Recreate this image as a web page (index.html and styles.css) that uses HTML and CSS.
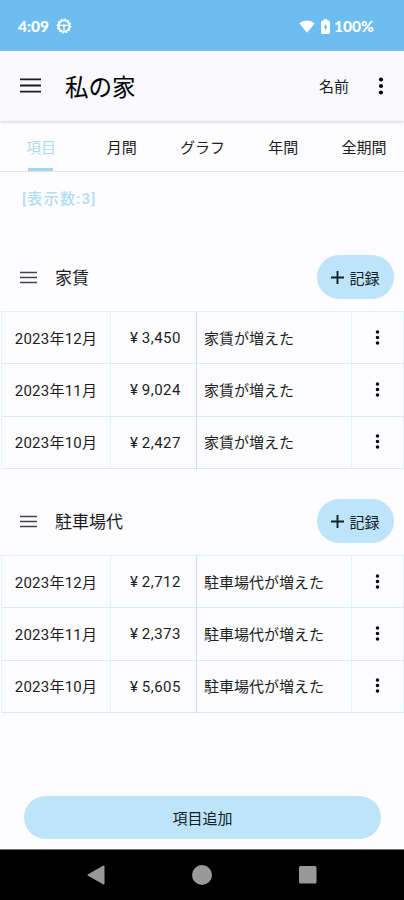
FILE: index.html
```
<!DOCTYPE html>
<html lang="ja">
<head>
    <meta charset="utf-8">
    <title>私の家</title>
    <link rel="stylesheet" href="styles.css">
</head>
<body>
    <svg class="defs" width="0" height="0">
        <symbol id="menu" viewBox="0 0 20 14">
            <path d="M0 1.2h20M0 7h20M0 12.8h20" stroke="currentColor" stroke-width="1.8"/>
        </symbol>
        <symbol id="dots" viewBox="0 0 6 18">
            <circle cx="3" cy="2.5" r="2.1"/><circle cx="3" cy="9" r="2.1"/><circle cx="3" cy="15.5" r="2.1"/>
        </symbol>
        <symbol id="plus" viewBox="0 0 13 13">
            <path d="M6.5 0v13M0 6.5h13" stroke="currentColor" stroke-width="1.9"/>
        </symbol>
    </svg>

    <div class="status-bar">
        <span class="clock">4:09</span>
        <svg class="wheel" width="16" height="16" viewBox="0 0 16 16" fill="none" stroke="#fff">
            <circle cx="8" cy="8" r="5.6" stroke-width="1.9"/>
            <circle cx="8" cy="8" r="6.9" stroke-width="1.1" stroke-dasharray="1.8 1.81"/>
            <path d="M3 7.3h10M8 8v5" stroke-width="1.2"/>
            <circle cx="8" cy="7.8" r="1" stroke-width="1"/>
        </svg>
        <svg class="wifi" width="16" height="13" viewBox="0 0 16 13" fill="#fff">
            <path d="M.3 3.5C4.7-.5 11.3-.5 15.7 3.5L8 12.7z"/>
        </svg>
        <svg class="battery" width="9" height="15" viewBox="0 0 9 15">
            <path d="M2.8 0h3.4v1.5h1.3Q9 1.5 9 3v10.5q0 1.5-1.5 1.5h-6Q0 15 0 13.5V3q0-1.5 1.5-1.5h1.3z" fill="#fff"/>
            <path d="M5 4.5L2.6 8.8h1.6v3.2l2.3-4.4H5z" fill="#6dbdf1"/>
        </svg>
        <span class="percent">100%</span>
    </div>

    <div class="app-bar">
        <svg class="menu-icon"><use href="#menu"/></svg>
        <h1>私の家</h1>
        <span class="sort">名前</span>
        <svg class="dots-icon"><use href="#dots"/></svg>
    </div>

    <div class="tabs">
        <div class="tab active">項目</div>
        <div class="tab">月間</div>
        <div class="tab">グラフ</div>
        <div class="tab">年間</div>
        <div class="tab">全期間</div>
    </div>

    <div class="content">
        <div class="count">[表示数:3]</div>

        <div class="section">
            <div class="section-header">
                <svg class="drag-icon"><use href="#menu"/></svg>
                <h2>家賃</h2>
                <button class="record"><svg class="plus-icon"><use href="#plus"/></svg>記録</button>
            </div>
            <div class="records">
                <div class="date">2023年12月</div>
                <div class="price"><span class="yen">¥</span>3,450</div>
                <div class="memo">家賃が増えた</div>
                <div class="more"><svg class="row-dots"><use href="#dots"/></svg></div>
                <div class="date">2023年11月</div>
                <div class="price"><span class="yen">¥</span>9,024</div>
                <div class="memo">家賃が増えた</div>
                <div class="more"><svg class="row-dots"><use href="#dots"/></svg></div>
                <div class="date">2023年10月</div>
                <div class="price"><span class="yen">¥</span>2,427</div>
                <div class="memo">家賃が増えた</div>
                <div class="more"><svg class="row-dots"><use href="#dots"/></svg></div>
            </div>
        </div>

        <div class="section">
            <div class="section-header">
                <svg class="drag-icon"><use href="#menu"/></svg>
                <h2>駐車場代</h2>
                <button class="record"><svg class="plus-icon"><use href="#plus"/></svg>記録</button>
            </div>
            <div class="records">
                <div class="date">2023年12月</div>
                <div class="price"><span class="yen">¥</span>2,712</div>
                <div class="memo">駐車場代が増えた</div>
                <div class="more"><svg class="row-dots"><use href="#dots"/></svg></div>
                <div class="date">2023年11月</div>
                <div class="price"><span class="yen">¥</span>2,373</div>
                <div class="memo">駐車場代が増えた</div>
                <div class="more"><svg class="row-dots"><use href="#dots"/></svg></div>
                <div class="date">2023年10月</div>
                <div class="price"><span class="yen">¥</span>5,605</div>
                <div class="memo">駐車場代が増えた</div>
                <div class="more"><svg class="row-dots"><use href="#dots"/></svg></div>
            </div>
        </div>
    </div>

    <button class="add-item">項目追加</button>

    <div class="nav-bar">
        <svg width="18" height="20" viewBox="0 0 18 20"><path class="back" d="M1.5 10L16.5 1.5v17z"/></svg>
        <svg width="20" height="20" viewBox="0 0 20 20"><circle cx="10" cy="10" r="10"/></svg>
        <svg width="18" height="18" viewBox="0 0 18 18"><rect width="17.5" height="17.5" rx="1.5"/></svg>
    </div>
</body>
</html>
```
FILE: styles.css
```
* {
    box-sizing: border-box;
}
body {
    margin: 0;
    height: 900px;
    display: flex;
    flex-direction: column;
    overflow: hidden;
    background: #fdfcff;
    color: #1b1c1e;
    font-family: Roboto, "Noto Sans CJK JP", sans-serif;
    font-size: 15px;
}
h1, h2 {
    margin: 0;
    font-weight: 400;
}
button {
    border: 0;
    padding: 0;
    color: #10202a;
    background: #bde4f9;
    font: inherit;
}
svg {
    flex: none;
}
.defs {
    display: none;
}

.status-bar {
    flex: none;
    height: 51px;
    display: flex;
    align-items: center;
    padding: 1px 29px 0 18px;
    background: #6dbdf1;
    color: #fff;
    font-family: Lato, sans-serif;
    font-size: 15.5px;
    font-weight: 900;
}
.clock {
    width: 31px;
}
.wheel {
    margin-left: 7px;
}
.wifi {
    margin-left: auto;
}
.battery {
    margin: 0 4px 0 6px;
}
.percent {
    width: 41px;
}

.app-bar {
    flex: none;
    height: 70px;
    display: flex;
    align-items: center;
    padding: 0 20px;
    background: #f9f9fe;
    box-shadow: 0 1px 3px #ceced2;
}
.app-bar h1 {
    margin-left: 24px;
    color: #000;
    font-size: 23.5px;
}
.menu-icon {
    width: 21px;
    height: 15px;
    margin-top: -1px;
}
.sort {
    margin: -1px 0 0 auto;
}
.dots-icon {
    width: 6px;
    height: 18px;
    margin-left: 29px;
}

.tabs {
    flex: none;
    height: 51px;
    display: grid;
    grid-template-columns: repeat(5, 1fr);
    border-bottom: 1px solid #e5e4e8;
}
.tab {
    display: flex;
    align-items: center;
    justify-content: center;
    padding: 3px 0 0 1px;
    border-bottom: 3px solid transparent;
}
.tab.active {
    color: #b0ddf5;
    background: linear-gradient(#9fd6f3, #9fd6f3) center bottom / 25px 3px no-repeat border-box;
}

.content {
    flex: 1;
}
.count {
    height: 83px;
    padding: 15px 22px;
    color: #b0ddf5;
    line-height: 24px;
    letter-spacing: 1.3px;
    font-weight: 500;
}
.section {
    margin-bottom: 30px;
}
.section-header {
    height: 56px;
    display: flex;
    align-items: flex-start;
    padding: 0 10px 0 20px;
}
.drag-icon {
    width: 17px;
    height: 13px;
    margin-top: 16px;
    color: #444;
}
.section-header h2 {
    margin-left: 18px;
    font-size: 17px;
    line-height: 46px;
}
.record {
    display: flex;
    align-items: center;
    justify-content: center;
    gap: 5px;
    width: 77px;
    height: 44px;
    margin-left: auto;
    border-radius: 22px;
}
.plus-icon {
    width: 13px;
    height: 13px;
}

.records {
    height: 158px;
    margin-left: 1px;
    display: grid;
    grid-template-columns: 109px 86px 155px 1fr;
    grid-template-rows: repeat(3, 1fr);
    border-top: 1px solid #dff2fb;
    border-left: 1px solid #e2f4fb;
}
.records > div {
    display: flex;
    align-items: center;
    padding-bottom: 1px;
    border-right: 1px solid #e0f3fa;
    border-bottom: 1px solid #d3ecf9;
}
.date {
    justify-content: center;
    letter-spacing: 0.25px;
}
.records > .price {
    justify-content: flex-end;
    padding: 1px 15px 0 0;
    border-right-color: #bfe3f6;
    letter-spacing: 0.5px;
}
.yen {
    width: 15px;
    text-align: center;
}
.memo {
    padding-left: 7px;
}
.more {
    justify-content: center;
}
.row-dots {
    width: 5px;
    height: 15px;
}

.add-item {
    flex: none;
    height: 43px;
    margin: 0 23px 10px 24px;
    border-radius: 22px;
}

.nav-bar {
    flex: none;
    height: 51px;
    display: flex;
    align-items: center;
    justify-content: space-between;
    padding: 0 87px;
    background: #000;
    border-top: 1px solid #777;
}
.nav-bar svg {
    fill: #999;
}
.back {
    stroke: #999;
    stroke-width: 2;
    stroke-linejoin: round;
}
```
